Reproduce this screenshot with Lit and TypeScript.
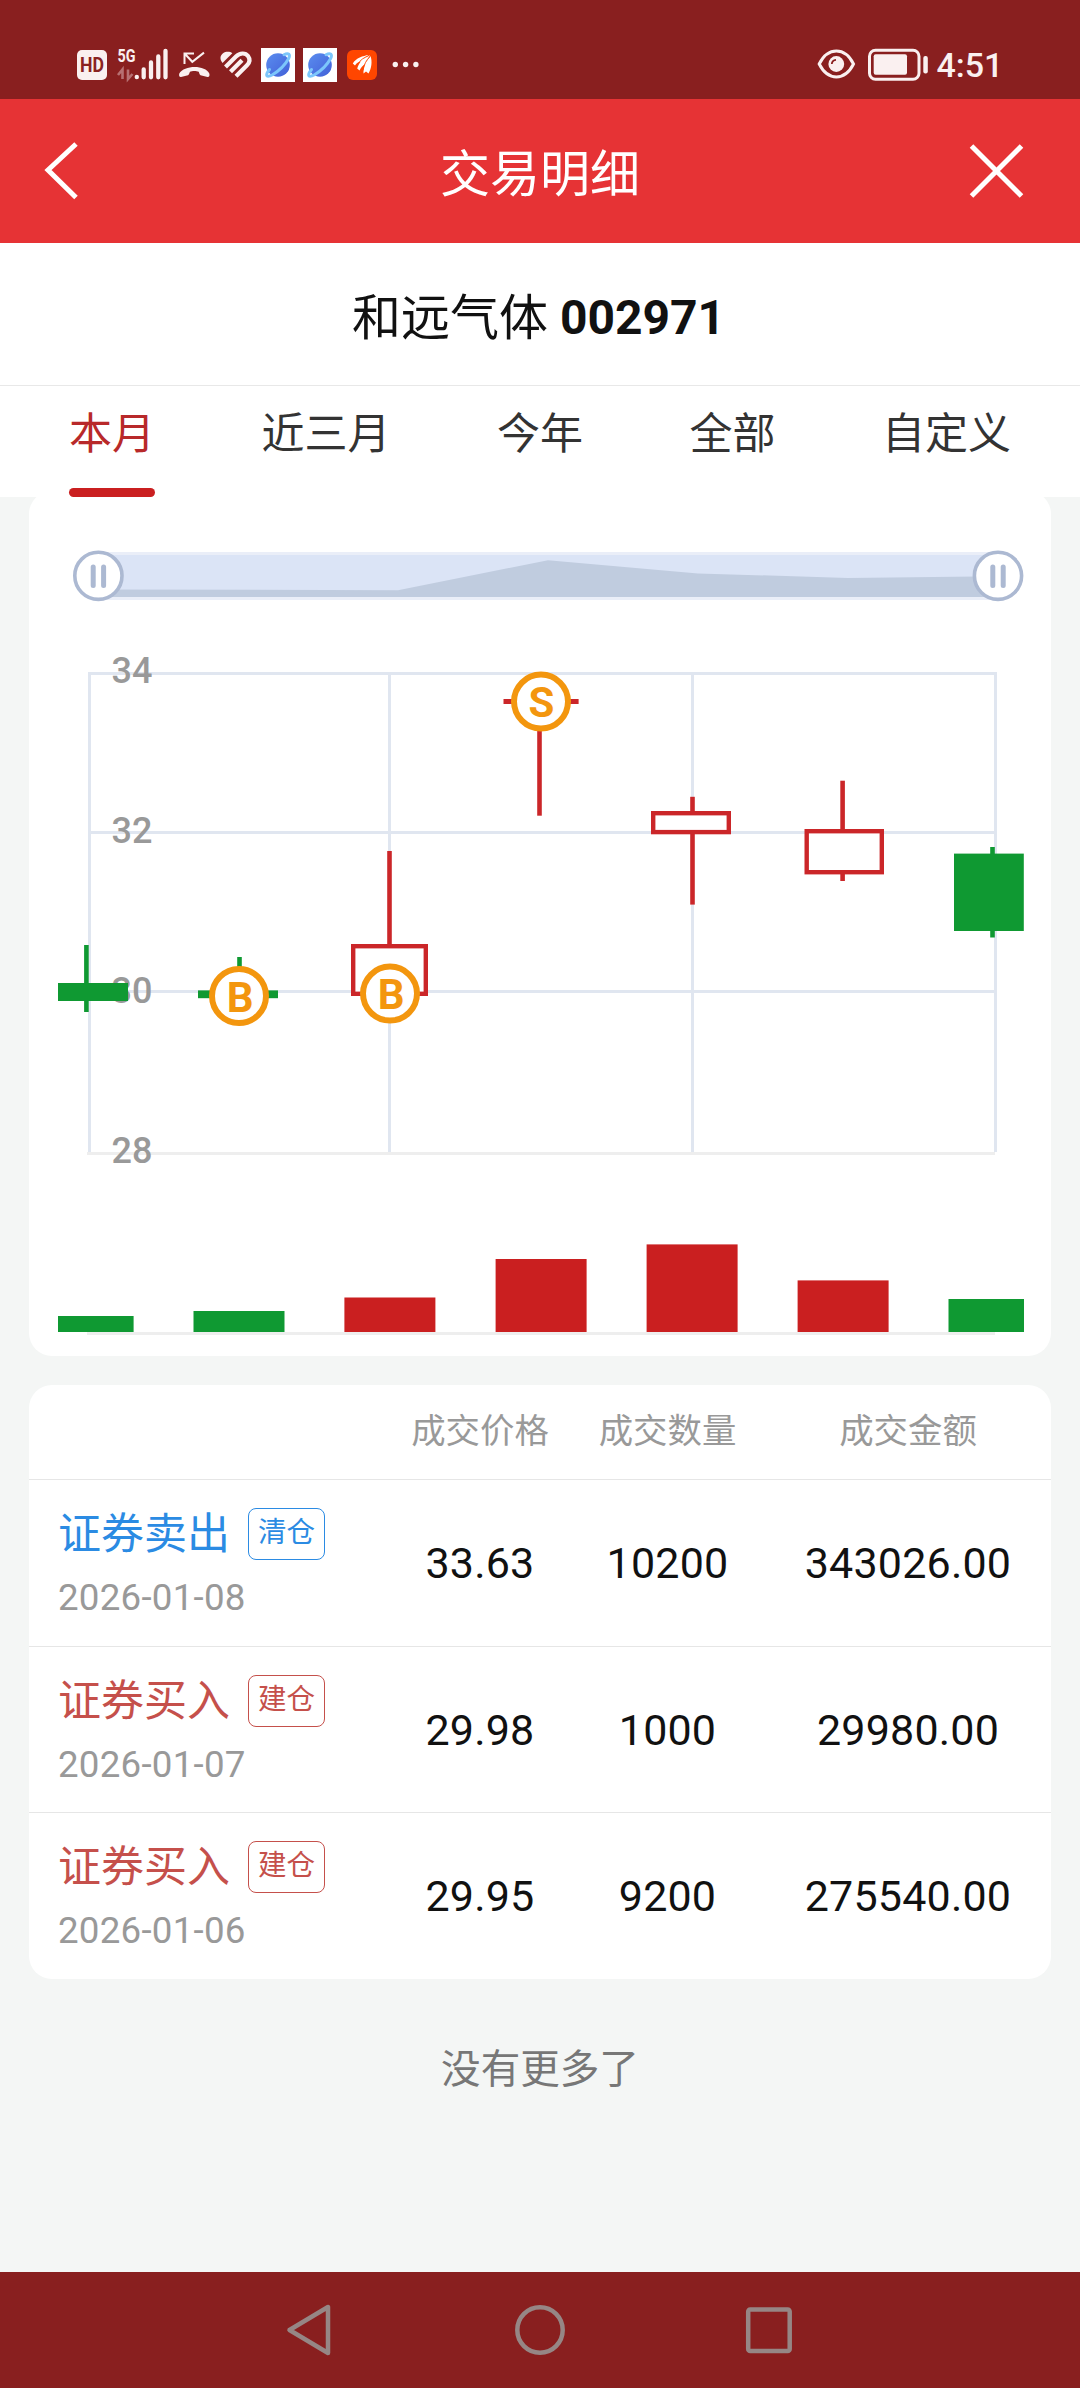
import { LitElement, html, svg, css } from "lit";
import { customElement, property } from "lit/decorators.js";
import { classMap } from "lit/directives/class-map.js";

const RED = "#cb2629";
const GREEN = "#0f9932";
const BAR_RED = "#ca1f20";
const ORANGE = "#f3960e";

/* ---------- status bar ---------- */

const planet = (x: number) => svg`
  <g transform="translate(${x} 48)">
    <rect width="34" height="34" fill="#fff" />
    <circle cx="17" cy="17" r="11.8" fill="url(#planet)" />
    <path d="M8.500 21.500 C3.500 27.500 5.500 30.200 11.500 26.800 C17.500 23.200 24.500 16.200 27.500 10.800 C29.800 6.500 27.500 4.200 23 6.800" fill="none" stroke="#7cc6fb" stroke-width="3" stroke-linecap="round" />
  </g>`;

@customElement("status-bar")
export class StatusBar extends LitElement {
  static styles = css`
    :host { display: block; height: 99px; background: #891f1f; }
    .art { display: block; }
    .label { font-family: Roboto, sans-serif; }
  `;
  render() {
    return html`<svg class="art" width="1080" height="99" viewBox="0 0 1080 99">
      <defs>
        <linearGradient id="planet" x1="0" y1="0" x2="1" y2="1">
          <stop offset="0" stop-color="#5b8def" /><stop offset="1" stop-color="#4160d8" />
        </linearGradient>
      </defs>
      <rect x="77" y="50" width="30" height="30" rx="5" fill="#faf0f0" />
      <text class="label" x="92" y="72" font-size="20" font-weight="700" fill="#8a2222" text-anchor="middle" textLength="24" lengthAdjust="spacingAndGlyphs">HD</text>
      <text class="label" x="117.500" y="62.300" font-size="18.500" font-weight="700" fill="#faf0f0" textLength="18" lengthAdjust="spacingAndGlyphs">5G</text>
      <path d="M118 75 L122.500 69.500 V79 M132.500 74 L128 79 V69.500" fill="none" stroke="#b77072" stroke-width="2.600" />
      <g stroke="#faf0f0" stroke-width="4.300" stroke-linecap="round">
        <path d="M136.800 76.800V77.200M143.700 69.500V77.300M151 62.500V77.300M158.300 56.500V77.300M165.500 50.800V77.300" />
      </g>
      <path d="M184.500 64 V53.500 H194 M185 54 L192.300 61.800 L204 52.600" fill="none" stroke="#faf0f0" stroke-width="2" />
      <path d="M179.300 73.500 C184 64.800 205.500 64.800 209.300 73.500 C209.900 75.500 209.300 77.300 207.500 77.100 L200.500 75.200 C199.300 74.700 199.200 72.500 198.700 71.700 C196.500 70.700 192 70.700 190 71.700 C189.500 72.500 189.300 74.700 188 75.200 L181 77.100 C179.300 77.300 178.700 75.500 179.300 73.500Z" fill="#faf0f0" />
      <path d="M222.500 63 C219.500 59.500 220 55.500 223 53.300 C226 51.200 230 51.500 232.300 53.200 Z" fill="#faf0f0" />
      <g fill="none" stroke="#faf0f0" stroke-width="4.200">
        <path d="M225.500 67 L236 56.500 C240 52.600 245.500 52.600 248 56 C250.500 59.500 250 62.300 247 65.300 L236 76.300" />
        <path d="M230.500 71.800 L242 60.300" />
      </g>
      ${planet(261)} ${planet(303)}
      <rect x="347" y="50" width="30" height="30" rx="6" fill="#ff4600" />
      <path d="M352.800 63.500 C356 58 363 55.800 368.800 55 C366 57 363.500 58.500 362 61 C359 61.800 356.500 63 355 65.500Z M357.200 68.500 C359 62 364 57.500 370 55.200 C367.500 59.500 366.500 61 365.500 64 C362.500 65.500 361 67.500 359.500 70.500Z M363.500 73.500 C363 66 367 60.500 370.500 56 C372.500 61.500 371.500 68.500 368.500 73.500 L366 71.500Z" fill="#fff" />
      <path d="M357.500 64.500 C360 60 364 57.500 369 55.500 M363 70.500 C364 64 366.500 60 370 56.500" fill="none" stroke="#ff4600" stroke-width=".9" />
      <g fill="#faf0f0"><circle cx="395.300" cy="64.500" r="2.700" /><circle cx="405.600" cy="64.500" r="2.700" /><circle cx="415.900" cy="64.500" r="2.700" /></g>

      <path d="M819.200 64 C828 46.800 844.800 46.800 853.500 64 C844.800 81.200 828 81.200 819.200 64Z" fill="none" stroke="#faf0f0" stroke-width="3" />
      <circle cx="836.300" cy="64" r="7.900" fill="#faf0f0" />
      <path d="M831.800 64 A4.500 4.500 0 0 1 836 59.800" fill="none" stroke="#891f1f" stroke-width="1.800" />
      <rect x="869.500" y="50.200" width="49.500" height="29" rx="6" fill="none" stroke="#faf0f0" stroke-width="3" />
      <rect x="873.700" y="54.300" width="33.300" height="20.500" rx="2" fill="#faf0f0" />
      <rect x="923.300" y="56" width="4.500" height="17.500" rx="2" fill="#faf0f0" />
      <text class="label" x="936.500" y="77" font-size="34" font-weight="500" fill="#faf0f0">4:51</text>
    </svg>`;
  }
}

/* ---------- chart ---------- */

interface Candle {
  x: number; high: number; low: number;
  left: number; right: number; top: number; bottom: number;
  up: boolean; mark?: string; markX?: number; markY?: number;
}

const CANDLES: Candle[] = [
  { x: 86.4, high: 945, low: 1012, left: 58, right: 128, top: 983, bottom: 1001, up: false },
  { x: 239.5, high: 957, low: 998, left: 198, right: 278, top: 990.4, bottom: 998.2, up: false, mark: "B", markX: 239, markY: 996 },
  { x: 389.5, high: 851, low: 946, left: 351, right: 428, top: 944, bottom: 996, up: true, mark: "B", markX: 390, markY: 993.6 },
  { x: 539.5, high: 701, low: 815.7, left: 503.5, right: 578.6, top: 699, bottom: 704, up: true, mark: "S", markX: 541, markY: 701.6 },
  { x: 692.5, high: 796.8, low: 904.6, left: 651, right: 731, top: 811, bottom: 834.3, up: true },
  { x: 842.6, high: 780.7, low: 881, left: 804.5, right: 884, top: 829, bottom: 874.4, up: true },
  { x: 992.5, high: 847, low: 937.5, left: 954, right: 1023.8, top: 853.6, bottom: 931, up: false },
];

const VOLUMES = [
  { x: 58, w: 75.6, top: 1316, up: false },
  { x: 193.5, w: 91, top: 1311, up: false },
  { x: 344.4, w: 91, top: 1297.5, up: true },
  { x: 495.6, w: 91, top: 1259, up: true },
  { x: 646.6, w: 91, top: 1244.4, up: true },
  { x: 797.6, w: 91, top: 1280.4, up: true },
  { x: 948.5, w: 75.5, top: 1299, up: false },
];

@customElement("trade-chart")
export class TradeChart extends LitElement {
  static styles = css`
    :host { display: block; height: 865px; }
    .plot { display: block; }
    .axis { font: 500 36px Roboto, sans-serif; fill: #999; }
    .mark { font: 700 42px Roboto, sans-serif; fill: #f3960e; text-anchor: middle; }
  `;

  private handle(x: number) {
    return svg`<g stroke="#acb9d2">
      <circle cx=${x} cy="575.800" r="23.600" fill="#fff" stroke-width="3.600" />
      <path d="M${x - 5.2} 567 V585.500 M${x + 5.2} 567 V585.500" stroke-width="5" stroke-linecap="round" />
    </g>`;
  }

  private candle(c: Candle) {
    const color = c.up ? RED : GREEN;
    const hollow = c.up && c.bottom - c.top > 6;
    return svg`
      <path d="M${c.x} ${c.high}V${c.low}" stroke=${color} stroke-width="4.600" />
      ${hollow
        ? svg`<rect x=${c.left + 2.2} y=${c.top + 2.2} width=${c.right - c.left - 4.4} height=${c.bottom - c.top - 4.4} fill="#fff" stroke=${color} stroke-width="4.400" />`
        : svg`<rect x=${c.left} y=${c.top} width=${c.right - c.left} height=${c.bottom - c.top} fill=${color} />`}`;
  }

  private marker(c: Candle) {
    return c.mark
      ? svg`<circle cx=${c.markX!} cy=${c.markY!} r="27" fill="#fff" stroke=${ORANGE} stroke-width="6" />
          <text class="mark" x=${c.markX! + (c.mark === "B" ? 1.2 : 0.5)} y=${c.markY! + 15.8}>${c.mark}</text>`
      : null;
  }

  render() {
    return html`<svg class="plot" width="1022" height="865" viewBox="29 491 1022 865">
      <rect x="98" y="552" width="900" height="48" fill="#eaeef8" />
      <rect x="98" y="555" width="900" height="42" fill="#dbe4f6" />
      <path d="M98 589.500 L398 590.200 L548 560.300 L698 573.400 L848 578 L998 576.300 V597 H98Z" fill="#c0ccdf" />
      ${this.handle(98.4)} ${this.handle(998)}

      <path d="M88 673.500H997M88 832.500H997M88 991.500H997M89.500 672V1152M389.500 672V1152M692.500 672V1152M995.500 672V1152" fill="none" stroke="#e0e6f0" stroke-width="3" />
      <path d="M87 1153.500H995M87 1333.500H995" stroke="#eee" stroke-width="3" />
      <text class="axis" x="111.500" y="683">34</text>
      <text class="axis" x="111.500" y="842.800">32</text>
      <text class="axis" x="111.500" y="1002.600">30</text>
      <text class="axis" x="111.500" y="1163">28</text>
      ${CANDLES.map((c) => this.candle(c))}
      ${CANDLES.map((c) => this.marker(c))}
      ${VOLUMES.map((v) => svg`<rect x=${v.x} y=${v.top} width=${v.w} height=${1332 - v.top} fill=${v.up ? BAR_RED : GREEN} />`)}
    </svg>`;
  }
}

/* ---------- trade list ---------- */

interface Trade { side: "buy" | "sell"; type: string; tag: string; date: string; price: string; qty: string; amount: string }

@customElement("trade-row")
export class TradeRow extends LitElement {
  @property({ attribute: false }) trade!: Trade;
  static styles = css`
    :host {
      display: grid; box-sizing: border-box; height: 166.670px;
      grid-template-columns: 358px 186px 189px 1fr;
      font-family: Roboto, "Noto Sans CJK SC", sans-serif;
    }
    .info { padding: 26px 0 0 29px; }
    .head { display: flex; align-items: center; gap: 18px; height: 56px; }
    .type { font-size: 43px; line-height: 56px; }
    .tag {
      box-sizing: border-box; width: 77px; height: 52px; border: 1px solid currentColor; border-radius: 8px;
      font-size: 28.500px; line-height: 48px; text-align: center;
    }
    .sell { color: #2b8be3; }
    .buy { color: #c5504b; }
    .date { font-size: 36.700px; line-height: 44px; margin-top: 14px; color: #999; letter-spacing: 0.250px; }
    .num { font-size: 43px; line-height: 166px; text-align: center; color: #111; letter-spacing: 0.200px; }
    .amount { padding-left: 3px; }
  `;
  render() {
    const t = this.trade;
    return html`
      <div class="info">
        <div class=${classMap({ head: true, [t.side]: true })}>
          <span class="type">${t.type}</span><span class="tag">${t.tag}</span>
        </div>
        <div class="date">${t.date}</div>
      </div>
      <div class="num">${t.price}</div>
      <div class="num">${t.qty}</div>
      <div class="num amount">${t.amount}</div>`;
  }
}

const TRADES: Trade[] = [
  { side: "sell", type: "证券卖出", tag: "清仓", date: "2026-01-08", price: "33.63", qty: "10200", amount: "343026.00" },
  { side: "buy", type: "证券买入", tag: "建仓", date: "2026-01-07", price: "29.98", qty: "1000", amount: "29980.00" },
  { side: "buy", type: "证券买入", tag: "建仓", date: "2026-01-06", price: "29.95", qty: "9200", amount: "275540.00" },
];

const TABS = ["本月", "近三月", "今年", "全部", "自定义"];

@customElement("app-root")
export class AppRoot extends LitElement {
  static styles = css`
    :host {
      display: flex; flex-direction: column; width: 1080px; height: 2388px; overflow: hidden;
      background: #f4f6f5; color: #111; font-family: Roboto, "Noto Sans CJK SC", sans-serif;
    }
    .header {
      display: flex; align-items: center; justify-content: space-between; box-sizing: border-box;
      height: 144px; flex: none; padding: 0 54px 0 42px; background: #e63335; color: #fff;
    }
    .title { font-size: 50px; line-height: 72px; padding-top: 8px; margin-right: -32px; }
    .icon { display: block; }
    .stock {
      height: 143px; flex: none; box-sizing: border-box; border-bottom: 1px solid #e8e8e8; background: #fff;
      display: flex; justify-content: center; align-items: center; gap: 12px; font-size: 49px; padding: 7px 3px 0 0;
    }
    .name { padding-bottom: 8px; }
    .code { font-size: 48px; font-weight: 700; }
    .tabs {
      display: flex; justify-content: space-between; box-sizing: border-box; height: 111px; flex: none;
      padding: 0 69px; background: #fff; position: relative; z-index: 1;
    }
    .tab { display: flex; flex-direction: column; justify-content: space-between; font-size: 43px; line-height: 97px; color: #333; }
    .active { color: #b8292a; }
    .active::after { content: ""; height: 9px; border-radius: 5px; background: #ca1f20; }
    .card { margin: 0 29px; border-radius: 23px; background: #fff; flex: none; }
    .chart { margin-top: -6px; }
    .list { margin-top: 29px; height: 594px; }
    .cols {
      display: grid; grid-template-columns: 358px 186px 189px 1fr; box-sizing: border-box; height: 95px;
      border-bottom: 1px solid #e6e6e6; font-size: 34.400px; line-height: 93px; text-align: center; color: #999;
    }
    .last { padding-left: 3px; }
    .row + .row { box-shadow: 0 -1px #e6e6e6; }
    .end { flex: 1; padding-top: 62px; text-align: center; font-size: 39.600px; line-height: 58px; color: #777; }
    .nav { display: flex; align-items: center; height: 116px; flex: none; background: #891f1f; justify-content: space-between; padding: 0 286px; }
  `;

  render() {
    return html`
      <status-bar></status-bar>
      <div class="header">
        <svg class="icon" width="38" height="60" viewBox="0 0 38 60" fill="none" stroke="#fff" stroke-width="5"><path d="M34 3 L6 29 L34 56.500" /></svg>
        <span class="title">交易明细</span>
        <svg class="icon" width="58" height="56" viewBox="0 0 58 56" fill="none" stroke="#fff" stroke-width="5"><path d="M3.500 3 L53.500 53 M53.500 3 L3.500 53" /></svg>
      </div>
      <div class="stock"><span class="name">和远气体</span><span class="code">002971</span></div>
      <div class="tabs">
        ${TABS.map((t, i) => html`<span class=${classMap({ tab: true, active: i === 0 })}>${t}</span>`)}
      </div>
      <div class="card chart"><trade-chart></trade-chart></div>
      <div class="card list">
        <div class="cols"><span></span><span>成交价格</span><span>成交数量</span><span class="last">成交金额</span></div>
        ${TRADES.map((t) => html`<trade-row class="row" .trade=${t}></trade-row>`)}
      </div>
      <div class="end">没有更多了</div>
      <div class="nav">
        <svg class="icon" width="50" height="56" viewBox="0 0 50 56" fill="none" stroke="#968685" stroke-width="4.500" stroke-linejoin="round"><path d="M42 5 V51 L3.500 28Z" /></svg>
        <svg class="icon" width="54" height="56" viewBox="0 0 54 56" fill="none" stroke="#968685" stroke-width="4.500"><circle cx="27" cy="28" r="22.700" /></svg>
        <svg class="icon" width="50" height="56" viewBox="0 0 50 56" fill="none" stroke="#968685" stroke-width="4.500"><rect x="4.200" y="7.500" width="41.500" height="41.500" rx="2" /></svg>
      </div>`;
  }
}
